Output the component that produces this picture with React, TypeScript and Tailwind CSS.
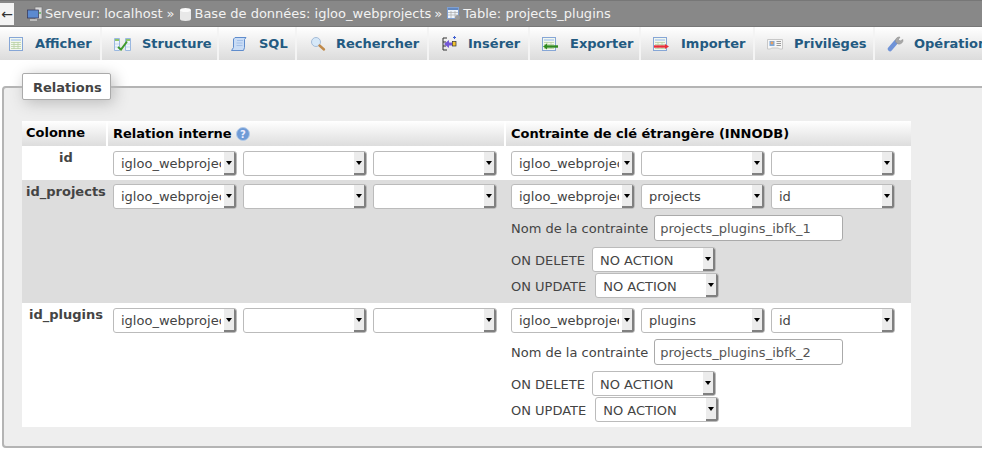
import type { ReactNode } from "react"

function TableIcon({ children }: { children?: ReactNode }) {
  return (
    <svg width="16" height="16" viewBox="0 0 16 16">
      <rect x="0.5" y="1.5" width="13" height="13" fill="#f2f7ee" stroke="#86a6d6" />
      <path d="M2 4h10" stroke="#c4d8ee" strokeWidth="2" />
      <path d="M2 6.500h10M2 8.500h10M2 10.500h10M2 12.500h10M5 6v7M9 6v7" stroke="#b9d0a4" strokeWidth="0.8" />
      {children}
    </svg>
  )
}

const icons: Record<string, ReactNode> = {
  afficher: <TableIcon />,
  structure: (
    <svg width="17" height="16" viewBox="0 0 17 16">
      <path d="M0.500 2.500v12h5v-12zM11.500 2.500v12h5v-12z" fill="#eef4fb" stroke="#9ab8e0" />
      <path d="M1 4h4M12 4h4" stroke="#8fc46a" strokeWidth="2" />
      <path d="M1 8h4M1 11h4M12 8h4M12 11h4" stroke="#c4d8ee" />
      <path d="M4 11l3 2.500 6-8" fill="none" stroke="#3f9a2a" strokeWidth="2" />
    </svg>
  ),
  sql: (
    <svg width="16" height="16" viewBox="0 0 16 16">
      <path d="M4 1.500h11l-1.500 2v8l-1 3H.5l2-3V3z" fill="#c9dcf5" stroke="#5f8ccc" />
      <path d="M6 4.500h6M5.500 7h6M5.500 9.500h6" stroke="#a4c0e8" />
    </svg>
  ),
  rechercher: (
    <svg width="16" height="16" viewBox="0 0 16 16">
      <circle cx="6" cy="6" r="4.500" fill="#d6e8f8" stroke="#a4bcd8" />
      <path d="M9.500 9.500l4.500 4" stroke="#c08a4a" strokeWidth="2.400" strokeLinecap="round" />
    </svg>
  ),
  inserer: (
    <svg width="16" height="16" viewBox="0 0 16 16">
      <path d="M5 2H1v4h3M1 6v4M4 10H1v4h4" fill="none" stroke="#333" />
      <path d="M2 8l5-4v2.500h3v3H7V12z" fill="#7458d8" />
      <rect x="10.500" y="5.500" width="3.500" height="4.500" fill="#f4c430" stroke="#333" strokeWidth="0.700" />
      <path d="M11 1.500h3M12.500 0v3" stroke="#4060d0" />
    </svg>
  ),
  exporter: (
    <TableIcon>
      <path d="M4 10.500h12" stroke="#2f8a1f" strokeWidth="2.400" />
      <path d="M5 7.500l-4 3 4 3z" fill="#2f8a1f" />
    </TableIcon>
  ),
  importer: (
    <TableIcon>
      <path d="M1 10.500h11" stroke="#e8303a" strokeWidth="2.400" />
      <path d="M12 8l4 2.500-4 2.500z" fill="#e8303a" />
    </TableIcon>
  ),
  privileges: (
    <svg width="16" height="16" viewBox="0 0 16 16">
      <path d="M0.500 3.500h15v9.500h-3l-1-1h-7l-1 1h-3z" fill="#f6f6f6" stroke="#c8c8c8" />
      <rect x="2.500" y="5" width="5" height="5" fill="#7fa8d8" />
      <circle cx="5" cy="7" r="1.400" fill="#e8a060" />
      <path d="M9.500 5.500h4.500M9.500 7.500h4.500M9.500 9.500h4.500" stroke="#9a9a9a" />
    </svg>
  ),
  operations: (
    <svg width="17" height="16" viewBox="0 0 17 16">
      <path d="M3 13l6-7" stroke="#6f93d8" strokeWidth="4.500" strokeLinecap="round" />
      <path d="M8.500 6a4 4 0 0 1 4.500-5l-1.500 2.500 1.500 1.500L16 3.500a4 4 0 0 1-5 4.500z" fill="#a8a8a8" stroke="#8a8a8a" strokeWidth="0.500" />
    </svg>
  ),
}

const tabs = [
  { label: "Afficher", icon: "afficher", w: "w-[102px]", pl: "pl-[9px]", gap: "gap-[10px]" },
  { label: "Structure", icon: "structure", w: "w-[117px]", pl: "pl-[12px]", gap: "gap-[12px]" },
  { label: "SQL", icon: "sql", w: "w-[78px]", pl: "pl-[12px]", gap: "gap-[12px]" },
  { label: "Rechercher", icon: "rechercher", w: "w-[132px]", pl: "pl-[13px]", gap: "gap-[10px]" },
  { label: "Insérer", icon: "inserer", w: "w-[101px]", pl: "pl-[13px]", gap: "gap-[10px]" },
  { label: "Exporter", icon: "exporter", w: "w-[111px]", pl: "pl-[12px]", gap: "gap-[12px]" },
  { label: "Importer", icon: "importer", w: "w-[114px]", pl: "pl-[12px]", gap: "gap-[12px]" },
  { label: "Privilèges", icon: "privileges", w: "w-[120px]", pl: "pl-[12px]", gap: "gap-[11px]" },
  { label: "Opérations", icon: "operations", w: "w-[130px]", pl: "pl-[12px]", gap: "gap-[11px]" },
]

function Select({ value = "", leading = "leading-[24px]" }: { value?: string; leading?: string }) {
  return (
    <div className={`flex h-[25px] w-[124px] shrink-0 overflow-hidden rounded-[3px] border border-[#bbb] bg-white text-[13px] text-[#444] ${leading}`}>
      <span className="min-w-0 flex-1 overflow-hidden whitespace-pre pl-[7px] mr-[3px]">{value}</span>
      <span className="flex w-[12px] shrink-0 items-center justify-center border-r-2 border-b-2 border-[#808080] bg-[#ececec]">
        <span className="mt-[1px] border-x-[3px] border-t-[4px] border-x-transparent border-t-black" />
      </span>
    </div>
  )
}

function ThreeSelects({ second = "", third = "" }: { second?: string; third?: string }) {
  return (
    <div className="flex gap-[6px]">
      <Select value="igloo_webprojects" />
      <Select value={second} />
      <Select value={third} />
    </div>
  )
}

function ConstraintFields({ name }: { name: string }) {
  return (
    <div className="text-[13px] text-[#444]">
      <div className="mt-[6px] flex items-center gap-[6px]">
        <span className="pt-[1px]">Nom de la contrainte</span>
        <div className="h-[26px] w-[189px] rounded-[3px] border border-[#aaa] bg-white pl-[5px] leading-[26px] text-[#555]">{name}</div>
      </div>
      <div className="mt-[6px] flex items-center gap-[7px]">
        <span className="pt-[2px]">ON DELETE</span>
        <Select value="NO ACTION" leading="leading-[26px]" />
      </div>
      <div className="mt-[1px] flex items-center gap-[9px]">
        <span className="pt-[2px]">ON UPDATE</span>
        <Select value="NO ACTION" leading="leading-[26px]" />
      </div>
    </div>
  )
}

type RowProps = {
  name: string
  bg: string
  h: string
  pt: string
  second?: string
  third?: string
  constraint?: string
}

function Row({ name, bg, h, pt, second, third, constraint }: RowProps) {
  return (
    <div className={`flex ${bg} ${h}`}>
      <div className={`w-[86px] shrink-0 pt-[4px] text-[13px] font-bold leading-[16px] text-[#444] ${name === "id_projects" ? "pl-[4px]" : "pl-[2px] text-center"}`}>{name}</div>
      <div className={`w-[398px] shrink-0 pl-[5px] ${pt}`}>
        <ThreeSelects />
      </div>
      <div className={`flex-1 pl-[5px] ${pt}`}>
        <ThreeSelects second={second} third={third} />
        {constraint && <ConstraintFields name={constraint} />}
      </div>
    </div>
  )
}

export default function App() {
  return (
    <div className="h-[452px] w-[982px] overflow-hidden bg-white font-['DejaVu_Sans',sans-serif]">
      <div className="flex h-[27px] items-center gap-[13px] border-t border-b border-[#777] bg-[#888] text-[13px] text-[#f2f2f2]">
        <div className="flex h-[22px] w-[14px] items-center justify-center bg-[#f3f3f3] text-[14px] leading-none text-[#333]">←</div>
        <div className="flex items-center gap-[2px] whitespace-nowrap">
          <svg width="16" height="16" viewBox="0 0 16 16" className="shrink-0">
            <rect x="8" y="1" width="7" height="12" fill="#d8d8d8" stroke="#777" strokeWidth="0.700" />
            <circle cx="13" cy="7" r="0.900" fill="#4caf50" />
            <rect x="0.500" y="4" width="11" height="8" fill="#5b8ad0" stroke="#335" strokeWidth="0.700" />
            <path d="M3 14h7" stroke="#ccc" strokeWidth="1.500" />
          </svg>
          <span>Serveur: localhost</span>
          <span className="ml-[2px]">»</span>
          <svg width="13" height="14" viewBox="0 0 13 14" className="ml-[3px] shrink-0">
            <path d="M1 3v9c0 1 2 2 5.500 2s5.500-1 5.500-2V3z" fill="#e8e8e8" />
            <ellipse cx="6.500" cy="3" rx="5.500" ry="2" fill="#fafafa" />
          </svg>
          <span>Base de données: igloo_webprojects</span>
          <span className="ml-[1px]">»</span>
          <svg width="15" height="15" viewBox="0 0 15 15" className="ml-[2px] shrink-0">
            <rect x="1.500" y="1.500" width="11" height="11" fill="#eef4fb" stroke="#7f9fd0" />
            <rect x="2" y="2" width="10" height="2" fill="#5f86c0" />
            <path d="M2 6.500h10M2 9h10M5 5v7M9 5v7" stroke="#aaa" strokeWidth="0.700" />
            <circle cx="11.500" cy="11.500" r="2.500" fill="#999" />
          </svg>
          <span>Table: projects_plugins</span>
        </div>
      </div>

      <div className="flex h-[33px] overflow-hidden bg-gradient-to-b from-white to-[#dcdcdc]">
        {tabs.map((tab) => (
          <div key={tab.label} className={`flex ${tab.w} ${tab.pl} ${tab.gap} shrink-0 items-center border-r-2 border-[#f4f4f4] text-[13px] font-bold whitespace-nowrap text-[#235a81]`}>
            <span className="h-[16px] w-[16px] shrink-0">{icons[tab.icon]}</span>
            <span>{tab.label}</span>
          </div>
        ))}
      </div>

      <fieldset className="mx-[2px] mt-[13px] h-[375px] w-[1100px] rounded-[4px] border-2 border-[#b4b4b4] bg-[#eee] pl-[18px]">
        <legend className="h-[27px] w-[89px] rounded-[2px] border border-[#aaa] bg-white text-left text-[13px] leading-[27px] font-bold text-[#444] shadow-[3px_3px_15px_#bbb]">
          <span className="block w-full pl-[10px]">Relations</span>
        </legend>
        <div className="mt-[21px] w-[889px] text-[13px]">
          <div className="flex h-[25px] items-center bg-gradient-to-b from-white to-[#ddd] font-bold text-black">
            <div className="h-full w-[86px] shrink-0 border-r-2 border-white pl-[4px] leading-[23px]">Colonne</div>
            <div className="flex h-full w-[398px] shrink-0 items-center gap-[4px] border-r-2 border-white pl-[5px]">
              <span>Relation interne</span>
              <svg width="14" height="14" viewBox="0 0 14 14">
                <circle cx="7" cy="7" r="6.500" fill="#6f9bd6" stroke="#b4cbe8" />
                <text x="7" y="10.500" textAnchor="middle" fontSize="10" fontWeight="bold" fill="#eef">?</text>
              </svg>
            </div>
            <div className="pl-[5px]">Contrainte de clé étrangère (INNODB)</div>
          </div>
          <Row name="id" bg="bg-white" h="h-[34px]" pt="pt-[5px]" />
          <Row name="id_projects" bg="bg-[#ddd]" h="h-[123px]" pt="pt-[4px]" second="projects" third="id" constraint="projects_plugins_ibfk_1" />
          <Row name="id_plugins" bg="bg-white" h="h-[124px]" pt="pt-[5px]" second="plugins" third="id" constraint="projects_plugins_ibfk_2" />
        </div>
      </fieldset>
    </div>
  )
}
